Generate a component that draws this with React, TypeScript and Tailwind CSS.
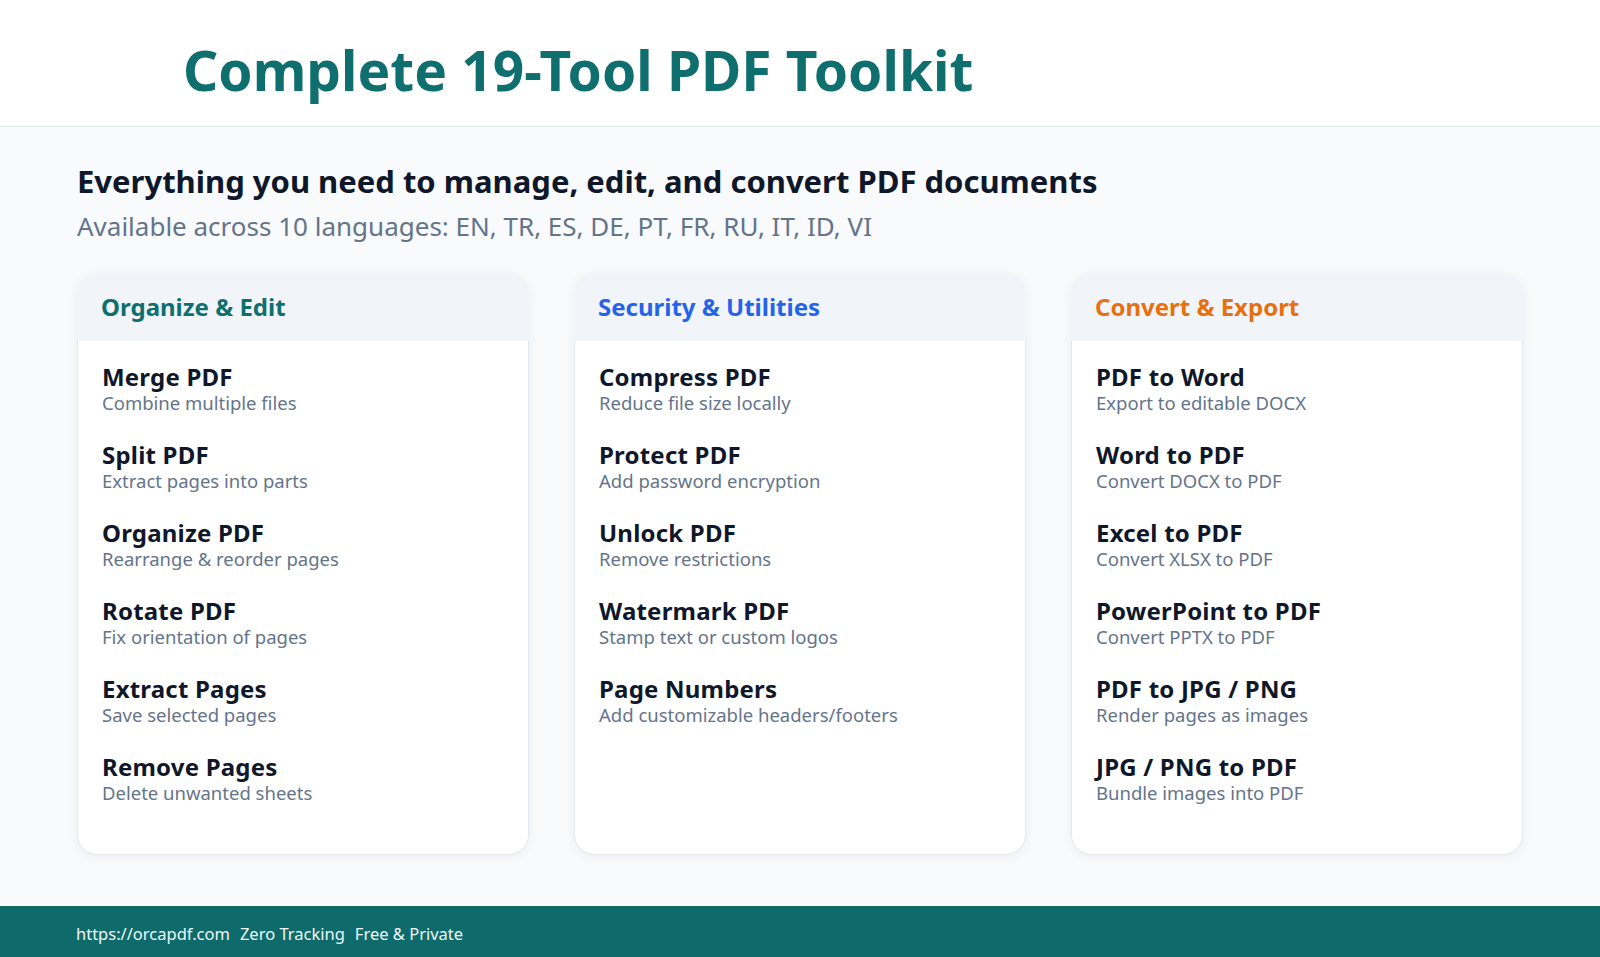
const groups = [
  {
    title: 'Organize & Edit',
    color: 'text-[#0f6f6f]',
    tools: [
      ['Merge PDF', 'Combine multiple files'],
      ['Split PDF', 'Extract pages into parts'],
      ['Organize PDF', 'Rearrange & reorder pages'],
      ['Rotate PDF', 'Fix orientation of pages'],
      ['Extract Pages', 'Save selected pages'],
      ['Remove Pages', 'Delete unwanted sheets'],
    ],
  },
  {
    title: 'Security & Utilities',
    color: 'text-[#2563eb]',
    tools: [
      ['Compress PDF', 'Reduce file size locally'],
      ['Protect PDF', 'Add password encryption'],
      ['Unlock PDF', 'Remove restrictions'],
      ['Watermark PDF', 'Stamp text or custom logos'],
      ['Page Numbers', 'Add customizable headers/footers'],
    ],
  },
  {
    title: 'Convert & Export',
    color: 'text-[#e8700f]',
    tools: [
      ['PDF to Word', 'Export to editable DOCX'],
      ['Word to PDF', 'Convert DOCX to PDF'],
      ['Excel to PDF', 'Convert XLSX to PDF'],
      ['PowerPoint to PDF', 'Convert PPTX to PDF'],
      ['PDF to JPG / PNG', 'Render pages as images'],
      ['JPG / PNG to PDF', 'Bundle images into PDF'],
    ],
  },
];

const ToolCard = ({ title, color, tools }: { title: string; color: string; tools: string[][] }) => (
  <div className="flex flex-col rounded-[20px] shadow-[0_2px_12px_rgba(15,23,42,0.05)]">
    <div className="flex h-[68px] items-center rounded-t-[20px] bg-[#f1f5f9] px-6">
      <h3 className={`text-[24px] font-bold leading-none ${color}`}>{title}</h3>
    </div>
    <div className="flex flex-1 flex-col gap-[26px] rounded-b-[20px] border-x border-b border-[#e2e8f0] bg-white px-6 pt-[22px] pb-[49px]">
      {tools.map(([name, desc]) => (
        <div key={name}>
          <div className="text-[24px] font-bold leading-[28px] tracking-[0.2px] text-[#0f172a]">{name}</div>
          <div className="text-[18.5px] leading-[24px] text-[#64748b]">{desc}</div>
        </div>
      ))}
    </div>
  </div>
);

export default function App() {
  return (
    <div className="min-h-screen bg-[#f8fafc] font-['Noto_Sans',sans-serif]">
      <header className="border-b border-[#e2e8f0] bg-white pt-[42px] pb-[28px] pl-[183px]">
        <h1 className="text-[55px] font-bold leading-[56px] text-[#0f6f6f]">Complete 19-Tool PDF Toolkit</h1>
      </header>

      <main className="px-[77px] pt-[39px] pb-[51px]">
        <h2 className="text-[31px] font-bold leading-[30px] text-[#0f172a]">
          Everything you need to manage, edit, and convert PDF documents
        </h2>
        <p className="mt-[17px] text-[26px] leading-none text-[#64748b]">
          Available across 10 languages: EN, TR, ES, DE, PT, FR, RU, IT, ID, VI
        </p>

        <div className="mt-[34px] grid grid-cols-3 gap-[45px]">
          {groups.map((g) => (
            <ToolCard key={g.title} {...g} />
          ))}
        </div>
      </main>

      <footer className="flex h-[51px] gap-[10px] bg-[#0f6b6b] px-[76px] pt-[20px] text-[16.5px] leading-none text-[#eef7f7]">
        <span>https://orcapdf.com</span>
        <span>Zero Tracking</span>
        <span>Free &amp; Private</span>
      </footer>
    </div>
  );
}
